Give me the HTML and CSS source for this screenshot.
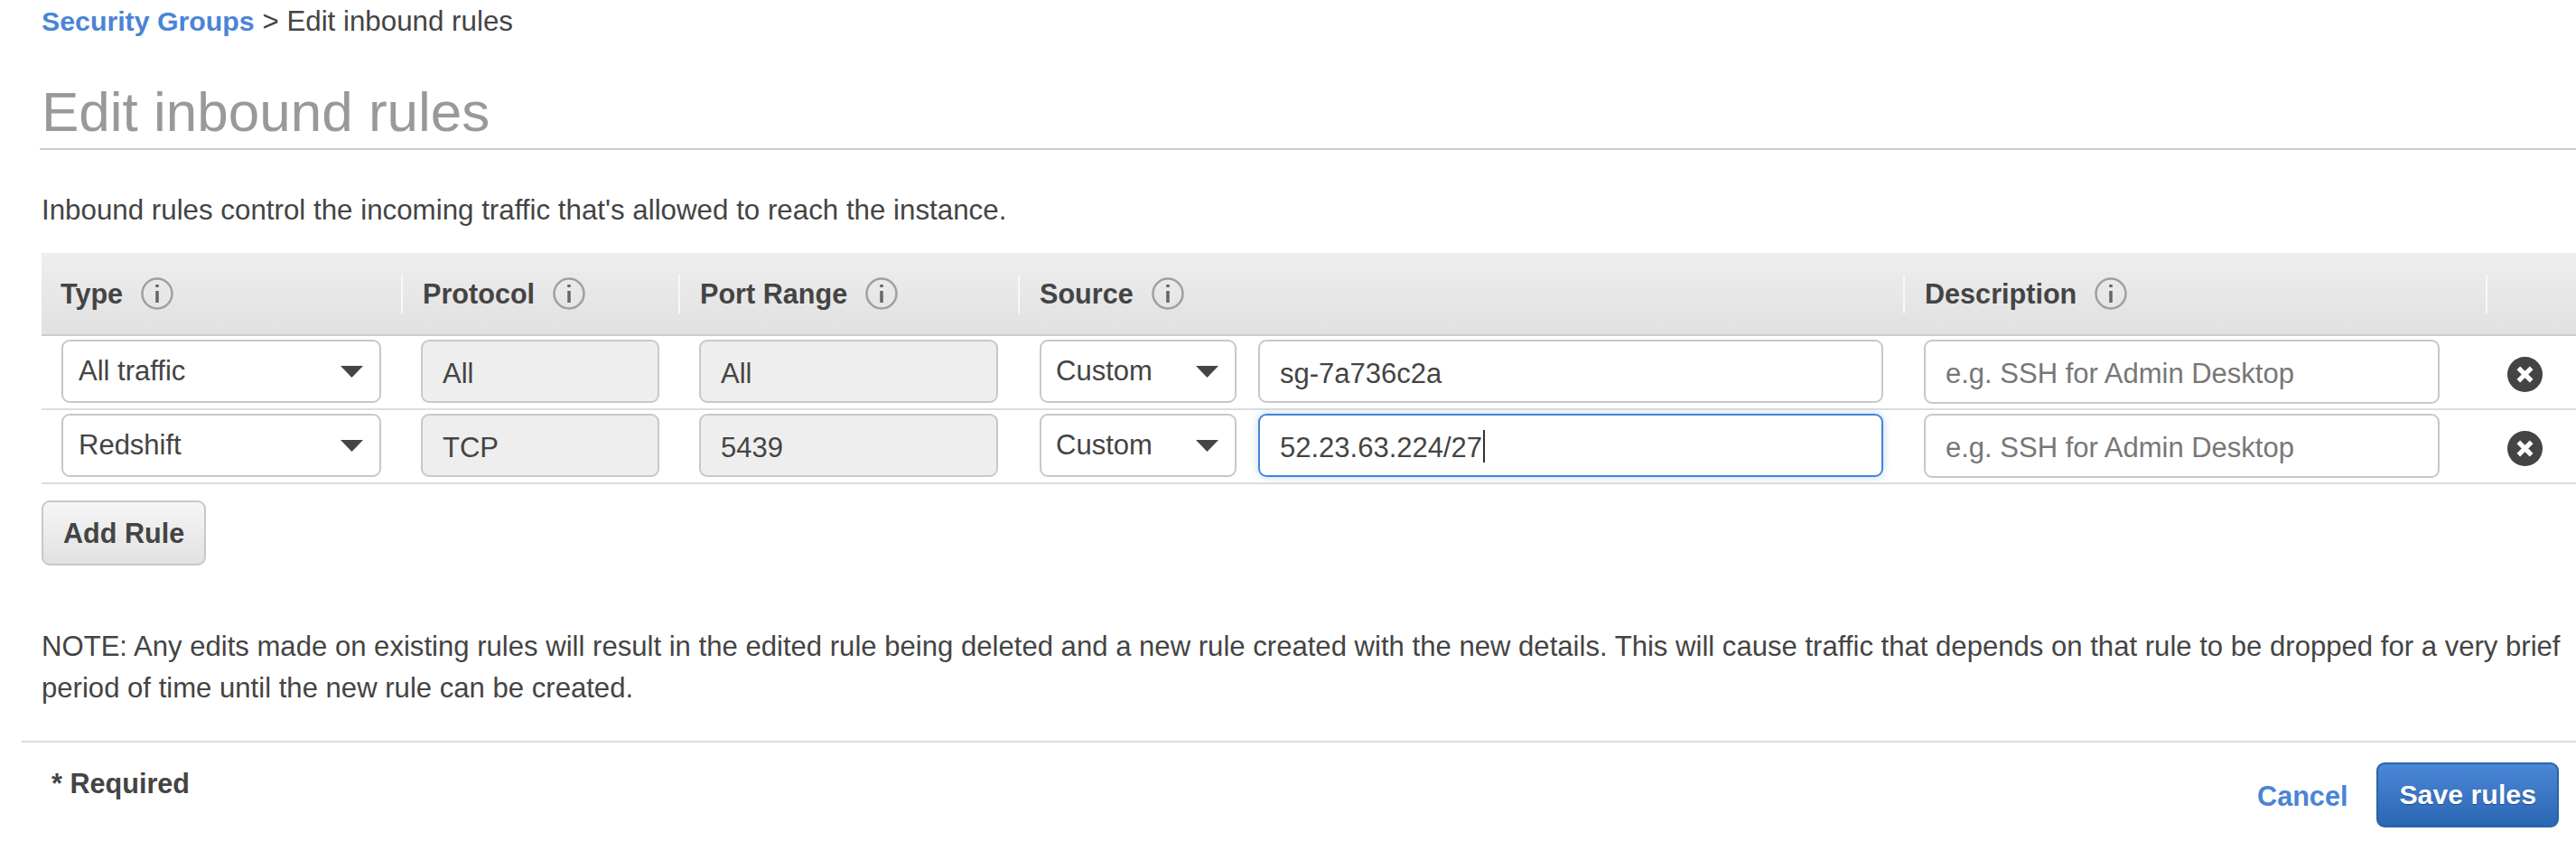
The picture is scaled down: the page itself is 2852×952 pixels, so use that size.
FILE: index.html
```html
<!DOCTYPE html>
<html lang="en">
<head>
    <meta charset="UTF-8">
    <meta name="viewport" content="width=device-width, initial-scale=1.0">
    <title>Edit inbound rules</title>
    <link rel="stylesheet" href="styles.css">
</head>
<body>
    <div class="content">
        <div class="breadcrumb"><a class="link" href="#">Security Groups</a> &gt; Edit inbound rules</div>
        <h1 class="title">Edit inbound rules</h1>
        <p class="intro">Inbound rules control the incoming traffic that's allowed to reach the instance.</p>
    </div>

    <div class="rules">
        <div class="row head">
            <div class="cell"><b>Type</b><svg class="info" viewBox="0 0 36 36"><circle cx="18" cy="18" r="16.5"/><path d="M18 15v13M18 8v3"/></svg></div>
            <div class="cell"><b>Protocol</b><svg class="info" viewBox="0 0 36 36"><circle cx="18" cy="18" r="16.5"/><path d="M18 15v13M18 8v3"/></svg></div>
            <div class="cell"><b>Port Range</b><svg class="info" viewBox="0 0 36 36"><circle cx="18" cy="18" r="16.5"/><path d="M18 15v13M18 8v3"/></svg></div>
            <div class="cell"><b>Source</b><svg class="info" viewBox="0 0 36 36"><circle cx="18" cy="18" r="16.5"/><path d="M18 15v13M18 8v3"/></svg></div>
            <div class="cell"><b>Description</b><svg class="info" viewBox="0 0 36 36"><circle cx="18" cy="18" r="16.5"/><path d="M18 15v13M18 8v3"/></svg></div>
            <div class="cell"></div>
        </div>

        <div class="row">
            <div class="cell">
                <div class="select"><span>All traffic</span><svg class="arrow" viewBox="0 0 25 13"><path d="M0 0h25L12.5 13z"/></svg></div>
            </div>
            <div class="cell protocol"><div class="field disabled">All</div></div>
            <div class="cell port"><div class="field disabled">All</div></div>
            <div class="cell source">
                <div class="select custom"><span>Custom</span><svg class="arrow" viewBox="0 0 25 13"><path d="M0 0h25L12.5 13z"/></svg></div>
                <div class="field grow">sg-7a736c2a</div>
            </div>
            <div class="cell desc"><div class="field placeholder">e.g. SSH for Admin Desktop</div></div>
            <div class="cell remove"><svg class="close" viewBox="0 0 38 38"><circle cx="19" cy="19" r="19"/><path d="M12 12l14 14M26 12L12 26"/></svg></div>
        </div>

        <div class="row">
            <div class="cell">
                <div class="select"><span>Redshift</span><svg class="arrow" viewBox="0 0 25 13"><path d="M0 0h25L12.5 13z"/></svg></div>
            </div>
            <div class="cell protocol"><div class="field disabled">TCP</div></div>
            <div class="cell port"><div class="field disabled">5439</div></div>
            <div class="cell source">
                <div class="select custom"><span>Custom</span><svg class="arrow" viewBox="0 0 25 13"><path d="M0 0h25L12.5 13z"/></svg></div>
                <div class="field grow focus">52.23.63.224/27<span class="caret"></span></div>
            </div>
            <div class="cell desc"><div class="field placeholder">e.g. SSH for Admin Desktop</div></div>
            <div class="cell remove"><svg class="close" viewBox="0 0 38 38"><circle cx="19" cy="19" r="19"/><path d="M12 12l14 14M26 12L12 26"/></svg></div>
        </div>
    </div>

    <div class="content">
        <button class="btn">Add Rule</button>
        <p class="note">NOTE: Any edits made on existing rules will result in the edited rule being deleted and a new rule created with the new details. This will cause traffic that depends on that rule to be dropped for a very brief period of time until the new rule can be created.</p>
    </div>

    <div class="footer">
        <div class="required">* Required</div>
        <a class="link cancel" href="#">Cancel</a>
        <button class="btn primary">Save rules</button>
    </div>
</body>
</html>
```

FILE: styles.css
```css
*, *::before, *::after {
    box-sizing: border-box;
}

body {
    margin: 0;
    font: 31.3px/30px "Liberation Sans", Arial, sans-serif;
    color: #444;
    background-color: #fff;
    overflow: hidden;
}

.content {
    padding-left: 46px;
    padding-right: 6px;
}

.link {
    color: #4a84d6;
    text-decoration: none;
    font-weight: bold;
}

.breadcrumb {
    padding-top: 9px;
    font-size: 31.3px;
}

.breadcrumb .link {
    font-size: 30.3px;
}

.title {
    margin: 50px -6px 0 -2px;
    padding: 0 0 5px 2px;
    font-size: 62px;
    font-weight: normal;
    line-height: 70px;
    color: #999;
    border-bottom: 2px solid #ccc;
}

.intro {
    margin: 52px 0 32px;
}

.rules {
    margin-left: 46px;
}

.row {
    display: grid;
    grid-template-columns: 398px 307px 376px 980px 645px 100px;
    height: 82px;
    padding-top: 4px;
    border-bottom: 2px solid #ddd;
}

.row.head {
    align-items: center;
    height: 92px;
    padding-top: 0;
    background: linear-gradient(#eee, #e1e1e1);
    border-bottom: 2px solid #ccc;
}

.head .cell {
    display: flex;
    align-items: center;
    gap: 20px;
    height: 43px;
    padding-left: 22px;
    font-size: 30.6px;
    border-left: 2px solid #f8f8f8;
}

.head .cell:first-child {
    padding-left: 21px;
    border-left: 0;
}

.info {
    width: 36px;
    height: 36px;
    fill: none;
    stroke: #a0a0a0;
    stroke-width: 2.5;
}

.info path {
    stroke: #666;
    stroke-width: 3.5;
}

.row:not(.head) .cell {
    padding: 0 22px;
}

.row:not(.head) .protocol {
    padding-right: 21px;
}

.row:not(.head) .port {
    padding-left: 23px;
}

.row:not(.head) .source {
    display: flex;
    gap: 24px;
    padding-left: 24px;
}

.row:not(.head) .desc {
    padding: 0 51px 0 23px;
}

.row:not(.head) .remove {
    padding: 19px 0 0 24px;
}

.select,
.field {
    display: flex;
    align-items: center;
    height: 70px;
    font-size: 31px;
    border: 2px solid #c8c8c8;
    border-radius: 9px;
}

.select {
    justify-content: space-between;
    padding: 0 18px 0 17px;
}

.custom {
    flex: none;
    width: 218px;
    padding-left: 16px;
}

.arrow {
    width: 25px;
    height: 13px;
    fill: #444;
}

.field {
    padding: 5px 0 0 22px;
}

.grow {
    flex: 1;
}

.disabled {
    background-color: #eee;
}

.placeholder {
    height: 71px;
    color: #777;
}

.focus {
    border-color: #4285d8;
    box-shadow: 0 0 8px rgba(66, 133, 216, 0.35);
}

.caret {
    width: 2px;
    height: 36px;
    margin: -4px 0 0 1px;
    background-color: #333;
}

.close {
    display: block;
    width: 39px;
    height: 39px;
}

.close circle {
    fill: #444;
}

.close path {
    fill: none;
    stroke: #fff;
    stroke-width: 5;
}

.btn {
    display: block;
    height: 72px;
    margin-top: 18px;
    padding: 0 22px;
    font: bold 30.6px "Liberation Sans", Arial, sans-serif;
    color: #444;
    background: linear-gradient(#f6f6f6, #e1e1e1);
    border: 2px solid #c8c8c8;
    border-radius: 9px;
}

.note {
    margin: 67px -6px 35px 0;
    font-size: 31.1px;
    line-height: 46px;
}

.footer {
    display: flex;
    margin-left: 24px;
    padding: 22px 19px 0 33px;
    border-top: 2px solid #ddd;
}

.required {
    margin: 8px auto 0 0;
    font-size: 30.6px;
    font-weight: bold;
}

.cancel {
    margin: 22px 32px 0 0;
    font-size: 30.6px;
}

.btn.primary {
    margin-top: 0;
    padding: 0 23px;
    font-size: 30.3px;
    color: #fff;
    background: linear-gradient(#4a87d6, #2b66b3);
    border-color: #2a63ae;
    text-shadow: 0 1px 1px #1f4f8f;
}
```
